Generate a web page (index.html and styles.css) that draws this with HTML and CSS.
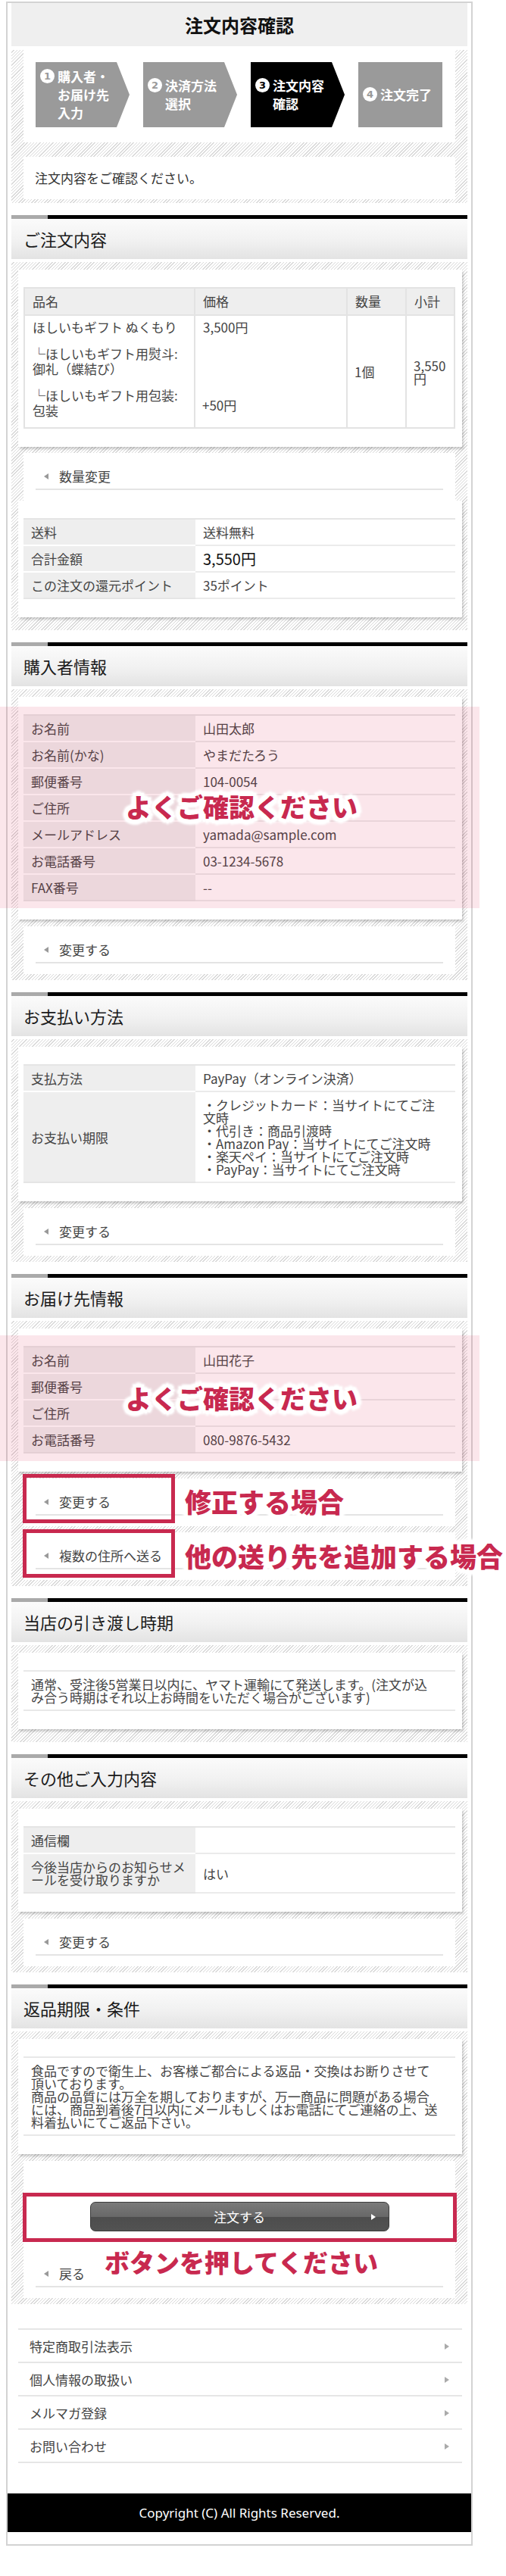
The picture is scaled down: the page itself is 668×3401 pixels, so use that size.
FILE: index.html
```html
<!DOCTYPE html>
<html lang="ja">

<head>
    <meta charset="UTF-8">
    <meta name="viewport" content="width=device-width, initial-scale=1.0">
    <title>注文内容確認</title>
    <link rel="stylesheet" href="styles.css">
</head>

<body>
    <div class="page">
        <h1 class="page-title">注文内容確認</h1>

        <div class="hatch hatch-top">
            <div class="box steps">
                <div class="step">
                    <div class="step-in"><span class="num">1</span><span class="step-txt">購入者・<br>お届け先<br>入力</span></div>
                </div>
                <div class="step">
                    <div class="step-in"><span class="num">2</span><span class="step-txt">決済方法<br>選択</span></div>
                </div>
                <div class="step step-on">
                    <div class="step-in"><span class="num">3</span><span class="step-txt">注文内容<br>確認</span></div>
                </div>
                <div class="step step-last">
                    <div class="step-in"><span class="num">4</span><span class="step-txt">注文完了</span></div>
                </div>
            </div>
            <div class="box msg">注文内容をご確認ください。</div>
        </div>

        <!-- ご注文内容 -->
        <section class="sec">
            <div class="sec-bar"></div>
            <h2 class="sec-head">ご注文内容</h2>
            <div class="hatch">
                <div class="card card-flush">
                    <table class="items">
                        <thead>
                            <tr>
                                <th class="c-name">品名</th>
                                <th class="c-price">価格</th>
                                <th class="c-qty">数量</th>
                                <th class="c-sub">小計</th>
                            </tr>
                        </thead>
                        <tbody>
                            <tr class="r1">
                                <td>ほしいもギフト ぬくもり</td>
                                <td>3,500円</td>
                                <td rowspan="3" class="mid">1個</td>
                                <td rowspan="3" class="mid sub">3,550<br>円</td>
                            </tr>
                            <tr class="r2">
                                <td>└ほしいもギフト用熨斗:<br>御礼（蝶結び）</td>
                                <td></td>
                            </tr>
                            <tr class="r3">
                                <td>└ほしいもギフト用包装:<br>包装</td>
                                <td class="mid">+50円</td>
                            </tr>
                        </tbody>
                    </table>
                </div>
                <div class="links"><a class="back" href="#">数量変更</a></div>
                <div class="card">
                    <table class="info">
                        <tr><th>送料</th><td>送料無料</td></tr>
                        <tr><th>合計金額</th><td class="total">3,550円</td></tr>
                        <tr><th>この注文の還元ポイント</th><td>35ポイント</td></tr>
                    </table>
                </div>
            </div>
        </section>

        <!-- 購入者情報 -->
        <section class="sec">
            <div class="sec-bar"></div>
            <h2 class="sec-head">購入者情報</h2>
            <div class="hatch">
                <div class="card">
                    <table class="info">
                        <tr><th>お名前</th><td>山田太郎</td></tr>
                        <tr><th>お名前(かな)</th><td>やまだたろう</td></tr>
                        <tr><th>郵便番号</th><td>104-0054</td></tr>
                        <tr><th>ご住所</th><td></td></tr>
                        <tr><th>メールアドレス</th><td>yamada@sample.com</td></tr>
                        <tr><th>お電話番号</th><td>03-1234-5678</td></tr>
                        <tr><th>FAX番号</th><td>--</td></tr>
                    </table>
                    <div class="hl hl-buyer"></div>
                    <p class="note note-buyer">よくご確認ください</p>
                </div>
                <div class="links"><a class="back" href="#">変更する</a></div>
            </div>
        </section>

        <!-- お支払い方法 -->
        <section class="sec">
            <div class="sec-bar"></div>
            <h2 class="sec-head">お支払い方法</h2>
            <div class="hatch">
                <div class="card">
                    <table class="info">
                        <tr><th>支払方法</th><td>PayPay（オンライン決済）</td></tr>
                        <tr>
                            <th>お支払い期限</th>
                            <td class="nowrap">・クレジットカード：当サイトにてご注<br>文時<br>・代引き：商品引渡時<br>・Amazon Pay：当サイトにてご注文時<br>・楽天ペイ：当サイトにてご注文時<br>・PayPay：当サイトにてご注文時</td>
                        </tr>
                    </table>
                </div>
                <div class="links"><a class="back" href="#">変更する</a></div>
            </div>
        </section>

        <!-- お届け先情報 -->
        <section class="sec">
            <div class="sec-bar"></div>
            <h2 class="sec-head">お届け先情報</h2>
            <div class="hatch">
                <div class="card">
                    <table class="info">
                        <tr><th>お名前</th><td>山田花子</td></tr>
                        <tr><th>郵便番号</th><td></td></tr>
                        <tr><th>ご住所</th><td></td></tr>
                        <tr><th>お電話番号</th><td>080-9876-5432</td></tr>
                    </table>
                    <div class="hl hl-ship"></div>
                    <p class="note note-ship">よくご確認ください</p>
                </div>
                <div class="links">
                    <a class="back" href="#">変更する</a>
                    <div class="mark mark-edit"></div>
                    <p class="note note-edit">修正する場合</p>
                </div>
                <div class="links">
                    <a class="back" href="#">複数の住所へ送る</a>
                    <div class="mark mark-add"></div>
                    <p class="note note-add">他の送り先を追加する場合</p>
                </div>
            </div>
        </section>

        <!-- 当店の引き渡し時期 -->
        <section class="sec">
            <div class="sec-bar"></div>
            <h2 class="sec-head">当店の引き渡し時期</h2>
            <div class="hatch">
                <div class="card">
                    <table class="text-tbl">
                        <tr><td>通常、受注後5営業日以内に、ヤマト運輸にて発送します。(注文が込<br>み合う時期はそれ以上お時間をいただく場合がございます)</td></tr>
                    </table>
                </div>
            </div>
        </section>

        <!-- その他ご入力内容 -->
        <section class="sec">
            <div class="sec-bar"></div>
            <h2 class="sec-head">その他ご入力内容</h2>
            <div class="hatch">
                <div class="card">
                    <table class="info">
                        <tr><th>通信欄</th><td></td></tr>
                        <tr><th class="nowrap">今後当店からのお知らせメ<br>ールを受け取りますか</th><td>はい</td></tr>
                    </table>
                </div>
                <div class="links"><a class="back" href="#">変更する</a></div>
            </div>
        </section>

        <!-- 返品期限・条件 -->
        <section class="sec">
            <div class="sec-bar"></div>
            <h2 class="sec-head">返品期限・条件</h2>
            <div class="hatch">
                <div class="card">
                    <table class="text-tbl">
                        <tr><td>食品ですので衛生上、お客様ご都合による返品・交換はお断りさせて<br>頂いております。<br>商品の品質には万全を期しておりますが、万一商品に問題がある場合<br>には、商品到着後7日以内にメールもしくはお電話にてご連絡の上、送<br>料着払いにてご返品下さい。</td></tr>
                    </table>
                </div>
                <div class="links btn-box">
                    <div class="btn-row">
                        <button class="order-btn" type="submit">注文する</button>
                    </div>
                    <a class="back back-low" href="#">戻る</a>
                    <div class="mark mark-btn"></div>
                    <p class="note note-btn">ボタンを押してください</p>
                </div>
            </div>
        </section>

        <ul class="foot-nav">
            <li><a href="#">特定商取引法表示</a></li>
            <li><a href="#">個人情報の取扱い</a></li>
            <li><a href="#">メルマガ登録</a></li>
            <li><a href="#">お問い合わせ</a></li>
        </ul>

        <footer class="copy">Copyright (C) All Rights Reserved.</footer>
    </div>
</body>

</html>
```

FILE: styles.css
```css
* {
    box-sizing: border-box;
}

body {
    margin: 0;
    font-family: "Noto Sans CJK JP", "Noto Sans", sans-serif;
    font-size: 17px;
    color: #444;
    background: #fff;
}

a {
    color: inherit;
    text-decoration: none;
}

.page {
    width: 616px;
    margin: 2px 0 0 8px;
    padding: 0 5px 16px;
    border: 2px solid #d3d3d3;
}

.page-title {
    margin: 0;
    height: 57px;
    line-height: 57px;
    background: #efefef;
    text-align: center;
    font-size: 24px;
    font-weight: bold;
    color: #111;
}

/* striped background */
.hatch {
    background: repeating-linear-gradient(135deg, #fff 0 2px, #d9d9d9 2px 3px);
    padding: 10px 0 8px;
}

.hatch-top {
    margin-top: 5px;
    padding: 0 16px 5px;
}

.box {
    background: #fff;
}

/* steps */
.steps {
    display: flex;
    gap: 18px;
    padding: 16px 16px 20px;
}

.step {
    width: 124px;
    height: 86px;
    display: flex;
    align-items: center;
    padding-left: 6px;
    background: #9a9a9a;
    color: #fff;
    font-size: 17px;
    font-weight: bold;
    line-height: 24px;
    clip-path: polygon(0 0, calc(100% - 17px) 0, 100% 50%, calc(100% - 17px) 100%, 0 100%);
}

.step-on {
    background: #000;
}

.step-last {
    width: 111px;
    clip-path: none;
}

.step-in {
    display: flex;
    align-items: flex-start;
    gap: 4px;
}

.num {
    flex: none;
    width: 19px;
    height: 19px;
    margin-top: 2px;
    border-radius: 50%;
    background: #fff;
    color: #9a9a9a;
    font-family: "DejaVu Sans", sans-serif;
    font-size: 13px;
    line-height: 19px;
    text-align: center;
}

.step-on .num {
    color: #000;
}

.step-txt {
    white-space: nowrap;
}

.msg {
    margin-top: 19px;
    padding: 16px 15px;
    line-height: 24px;
    color: #333;
}

/* sections */
.sec {
    margin-top: 16px;
}

.sec-bar {
    height: 5px;
    background: linear-gradient(to right, #aaa 48px, #000 48px);
}

.sec-head {
    margin: 0 0 4px;
    height: 53px;
    padding-left: 16px;
    line-height: 53px;
    font-size: 22px;
    font-weight: normal;
    color: #1a1a1a;
    background: linear-gradient(#fbfbfb, #f1f1f1 55%, #e3e3e3);
}

.card {
    position: relative;
    margin: 0 7px 9px 9px;
    padding: 23px 9px 24px 7px;
    background: #fff;
    box-shadow: 2px 3px 3px rgba(0, 0, 0, 0.18);
}

.card-flush {
    margin-bottom: 0;
}

.links {
    position: relative;
    margin: 8px 16px 0;
    padding: 14px 0;
    background: #fff;
}

.back {
    display: flex;
    align-items: center;
    height: 35px;
    margin: 0 16px;
    padding-left: 11px;
    border-bottom: 2px solid #e4e4e4;
}

.back::before {
    content: "";
    margin-right: 14px;
    border-style: solid;
    border-width: 4px 6px 4px 0;
    border-color: transparent #999 transparent transparent;
}

/* tables */
table {
    width: 100%;
    border-collapse: collapse;
}

th,
td {
    padding: 8px 10px;
    line-height: 17px;
    text-align: left;
    font-weight: normal;
    vertical-align: middle;
}

.nowrap {
    white-space: nowrap;
}

.info {
    border-top: 2px solid #e5e5e5;
}

.info th {
    width: 227px;
    background: #eee;
    border-bottom: 2px solid #fff;
}

.info td {
    border-bottom: 2px solid #ebebeb;
}

.info tr:last-child th {
    border-bottom-color: #e5e5e5;
}

.info .total {
    font-size: 20px;
    color: #111;
}

.items {
    table-layout: fixed;
    border: 2px solid #e3e3e3;
}

.items th {
    padding: 8px 10px;
    line-height: 18px;
    background: #eee;
    border-right: 2px solid #e3e3e3;
    border-bottom: 2px solid #e3e3e3;
}

.items .c-name {
    width: 225px;
}

.items .c-price {
    width: 201px;
}

.items .c-qty {
    width: 78px;
}

.items td {
    padding: 7px 10px 8px;
    line-height: 20px;
    vertical-align: top;
    white-space: nowrap;
    border-right: 2px solid #e3e3e3;
}

.items .r1 td {
    padding-top: 5px;
}

.items .r3 td {
    padding-bottom: 12px;
}

.items td.mid {
    padding: 0 9px;
    vertical-align: middle;
}

.items td.sub {
    line-height: 17px;
}

.text-tbl {
    border-top: 2px solid #e8e8e8;
    border-bottom: 2px solid #e8e8e8;
}

.text-tbl td {
    white-space: nowrap;
}

/* order button */
.btn-box {
    padding-top: 14px;
}

.btn-row {
    display: flex;
    justify-content: center;
    margin-top: 30px;
    padding: 10px 0;
}

.order-btn {
    position: relative;
    width: 395px;
    height: 39px;
    border: 1px solid #3c3c3c;
    border-radius: 7px;
    background: linear-gradient(#7a7a7a, #686868 50%, #4d4d4d 52%, #525252);
    color: #fff;
    font-family: inherit;
    font-size: 17px;
    cursor: pointer;
}

.order-btn::after {
    content: "";
    position: absolute;
    right: 17px;
    top: 15px;
    border-style: solid;
    border-width: 4px 0 4px 6px;
    border-color: transparent transparent transparent #fff;
}

.back-low {
    margin-top: 29px;
}

/* annotations */
.hl {
    position: absolute;
    left: -24px;
    width: 633px;
    background: rgba(220, 50, 90, 0.12);
    z-index: 1;
}

.hl-buyer {
    top: 13px;
    height: 266px;
}

.hl-ship {
    top: 9px;
    height: 166px;
}

.note {
    position: absolute;
    z-index: 3;
    margin: 0;
    white-space: nowrap;
    color: #c8294f;
    font-size: 34px;
    font-weight: 900;
    line-height: 40px;
    text-shadow: 0 0 2px #fff, 5px 0 1px #fff, -5px 0 1px #fff, 0 5px 1px #fff, 0 -5px 1px #fff,
        4px 4px 1px #fff, -4px 4px 1px #fff, 4px -4px 1px #fff, -4px -4px 1px #fff,
        7px 0 3px #fff, -7px 0 3px #fff, 0 7px 3px #fff, 0 -7px 3px #fff,
        5px 5px 3px #fff, -5px 5px 3px #fff, 5px -5px 3px #fff, -5px -5px 3px #fff;
}

.note-buyer {
    top: 125px;
    left: 142px;
}

.note-ship {
    top: 72px;
    left: 142px;
}

.note-edit {
    top: 10px;
    left: 213px;
    font-size: 35px;
}

.note-add {
    top: 11px;
    left: 213px;
    font-size: 35px;
}

.note-btn {
    top: 113px;
    left: 107px;
    font-size: 33px;
}

.mark {
    position: absolute;
    z-index: 2;
    border: 5px solid #c8294f;
}

.mark-edit {
    top: -6px;
    left: -1px;
    width: 201px;
    height: 65px;
}

.mark-add {
    top: -4px;
    left: -1px;
    width: 201px;
    height: 64px;
}

.mark-btn {
    top: 42px;
    left: -1px;
    width: 573px;
    height: 65px;
}

/* footer */
.foot-nav {
    list-style: none;
    margin: 32px 7px 0 9px;
    padding: 0;
    border-top: 2px solid #e6e6e6;
}

.foot-nav a {
    display: flex;
    justify-content: space-between;
    align-items: center;
    padding: 13px 17px 12px 15px;
    line-height: 17px;
    border-bottom: 2px solid #e6e6e6;
}

.foot-nav a::after {
    content: "";
    border-style: solid;
    border-width: 4px 0 4px 6px;
    border-color: transparent transparent transparent #aaa;
}

.copy {
    margin: 40px -5px 0;
    height: 51px;
    line-height: 51px;
    background: #000;
    color: #fff;
    text-align: center;
    font-family: "Noto Sans", sans-serif;
    font-size: 17px;
}
```
